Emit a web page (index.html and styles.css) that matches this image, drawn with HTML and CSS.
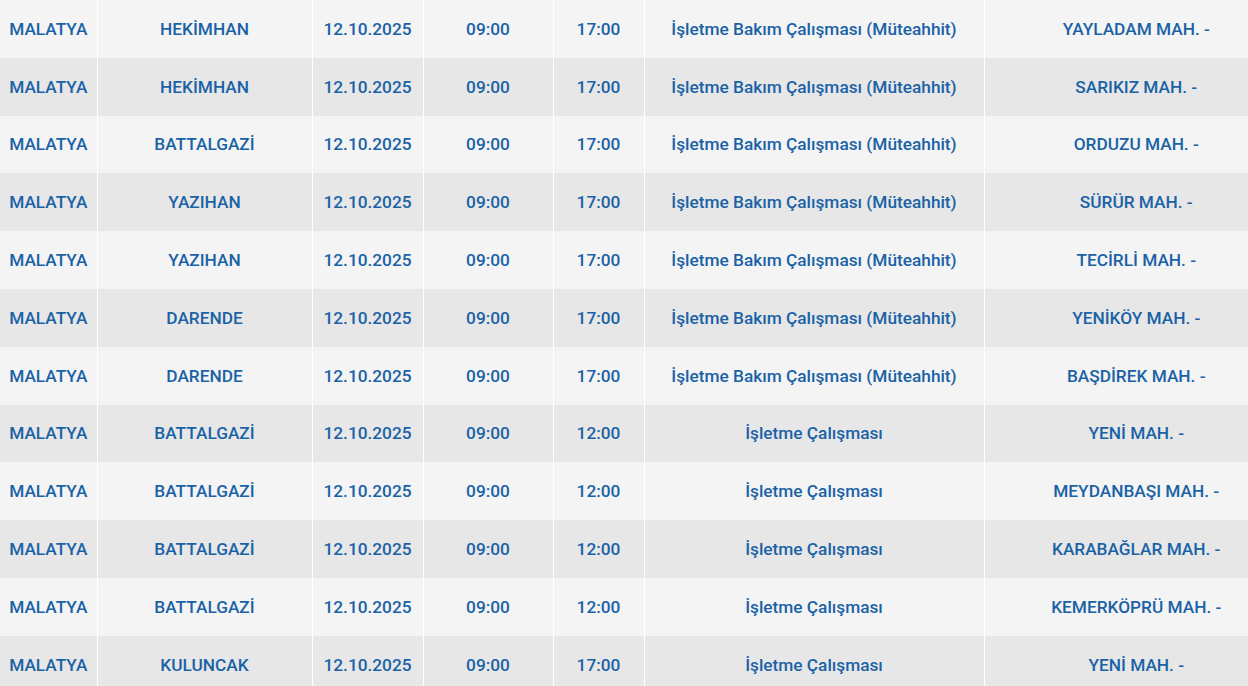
FILE: index.html
```html
<!DOCTYPE html>
<html lang="tr">
<head>
<meta charset="utf-8">
<link rel="stylesheet" href="styles.css">
</head>
<body>
<table class="outage">
<colgroup>
<col class="c1"><col class="c2"><col class="c3"><col class="c4"><col class="c5"><col class="c6"><col class="c7">
</colgroup>
<tbody>
<tr><td>MALATYA</td><td>HEKİMHAN</td><td>12.10.2025</td><td>09:00</td><td>17:00</td><td>İşletme Bakım Çalışması (Müteahhit)</td><td>YAYLADAM MAH. -</td></tr>
<tr><td>MALATYA</td><td>HEKİMHAN</td><td>12.10.2025</td><td>09:00</td><td>17:00</td><td>İşletme Bakım Çalışması (Müteahhit)</td><td>SARIKIZ MAH. -</td></tr>
<tr><td>MALATYA</td><td>BATTALGAZİ</td><td>12.10.2025</td><td>09:00</td><td>17:00</td><td>İşletme Bakım Çalışması (Müteahhit)</td><td>ORDUZU MAH. -</td></tr>
<tr><td>MALATYA</td><td>YAZIHAN</td><td>12.10.2025</td><td>09:00</td><td>17:00</td><td>İşletme Bakım Çalışması (Müteahhit)</td><td>SÜRÜR MAH. -</td></tr>
<tr><td>MALATYA</td><td>YAZIHAN</td><td>12.10.2025</td><td>09:00</td><td>17:00</td><td>İşletme Bakım Çalışması (Müteahhit)</td><td>TECİRLİ MAH. -</td></tr>
<tr><td>MALATYA</td><td>DARENDE</td><td>12.10.2025</td><td>09:00</td><td>17:00</td><td>İşletme Bakım Çalışması (Müteahhit)</td><td>YENİKÖY MAH. -</td></tr>
<tr><td>MALATYA</td><td>DARENDE</td><td>12.10.2025</td><td>09:00</td><td>17:00</td><td>İşletme Bakım Çalışması (Müteahhit)</td><td>BAŞDİREK MAH. -</td></tr>
<tr><td>MALATYA</td><td>BATTALGAZİ</td><td>12.10.2025</td><td>09:00</td><td>12:00</td><td>İşletme Çalışması</td><td>YENİ MAH. -</td></tr>
<tr><td>MALATYA</td><td>BATTALGAZİ</td><td>12.10.2025</td><td>09:00</td><td>12:00</td><td>İşletme Çalışması</td><td>MEYDANBAŞI MAH. -</td></tr>
<tr><td>MALATYA</td><td>BATTALGAZİ</td><td>12.10.2025</td><td>09:00</td><td>12:00</td><td>İşletme Çalışması</td><td>KARABAĞLAR MAH. -</td></tr>
<tr><td>MALATYA</td><td>BATTALGAZİ</td><td>12.10.2025</td><td>09:00</td><td>12:00</td><td>İşletme Çalışması</td><td>KEMERKÖPRÜ MAH. -</td></tr>
<tr><td>MALATYA</td><td>KULUNCAK</td><td>12.10.2025</td><td>09:00</td><td>17:00</td><td>İşletme Çalışması</td><td>YENİ MAH. -</td></tr>
</tbody>
</table>
</body>
</html>
```
FILE: styles.css
```css
html, body {
  margin: 0;
  padding: 0;
  background: #f3f3f3;
  overflow: hidden;
}
.outage {
  width: 1288px;
  border-collapse: collapse;
  table-layout: fixed;
  font-family: Roboto, "Noto Sans", sans-serif;
  font-weight: 500;
  font-size: 17.25px;
  color: #1a62a6;
}
.c1 { width: 97px; }
.c2 { width: 215px; }
.c3 { width: 111px; }
.c4 { width: 130px; }
.c5 { width: 91px; }
.c6 { width: 340px; }
.c7 { width: 304px; }
.outage tr {
  height: 57.8px;
}
.outage tr:nth-child(odd) {
  background: #f4f4f4;
}
.outage tr:nth-child(even) {
  background: #e7e7e7;
}
.outage td {
  padding: 0;
  text-align: center;
  vertical-align: middle;
  border-left: 1px solid #ffffff;
  white-space: nowrap;
}
.outage td:first-child {
  border-left: none;
}
```
